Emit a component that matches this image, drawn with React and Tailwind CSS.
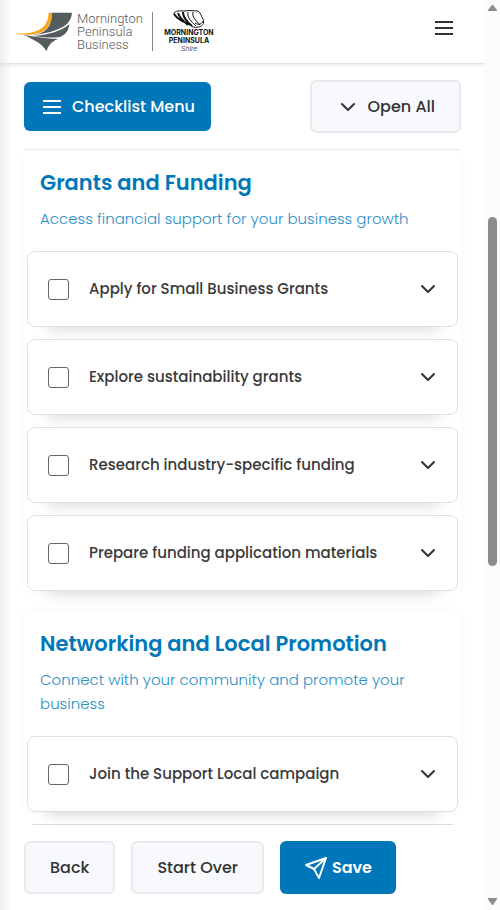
import { useState } from "react";

const sections = [
  {
    title: "Grants and Funding",
    text: "Access financial support for your business growth",
    items: [
      "Apply for Small Business Grants",
      "Explore sustainability grants",
      "Research industry-specific funding",
      "Prepare funding application materials",
    ],
  },
  {
    title: "Networking and Local Promotion",
    text: "Connect with your community and promote your business",
    items: ["Join the Support Local campaign"],
  },
];

function Chevron() {
  return (
    <svg width="16" height="16" viewBox="0 0 16 16" fill="none" stroke="currentColor" strokeWidth="2" strokeLinecap="round" strokeLinejoin="round" aria-hidden="true">
      <path d="M2 5 8 11 14 5" />
    </svg>
  );
}

function Bars() {
  return (
    <svg width="18" height="14" viewBox="0 0 18 14" fill="currentColor" aria-hidden="true">
      <path d="M0 0h18v2H0zM0 6h18v2H0zM0 12h18v2H0z" />
    </svg>
  );
}

function Logo() {
  return (
    <a href="#home" className="flex items-center" aria-label="Mornington Peninsula Business">
      <svg width="56" height="40" viewBox="0 0 168 120" aria-hidden="true">
        <path d="M2 64C52 66 96 56 98 2H108C108 58 70 74 2 66Z" fill="#f9a61a" />
        <path d="M108 2H168C166 20 160 30 150 38C126 56 84 67 44 69C88 66 108 46 108 2Z" fill="#555c5d" />
        <path d="M160 37C158 56 148 69 132 75C104 79 76 75 50 72C98 70 138 56 160 37Z" fill="#555c5d" />
        <path d="M24 69C56 73 92 81 126 81C106 88 96 102 92 118C80 96 56 84 24 69Z" fill="#555c5d" />
      </svg>
      <span className="ml-[5px] w-[71px] font-['Roboto',sans-serif] text-[13px] leading-[13px] font-light text-[#555c5d]">
        Mornington Peninsula Business
      </span>
      <span className="ml-1 h-[39px] w-px bg-[#888]" />
      <span className="ml-2 flex w-[56px] flex-col items-center font-['Inter',sans-serif] text-[7px] leading-[8px] font-bold text-[#111]">
        <svg width="32" height="19" viewBox="0 0 32 19" fill="none" stroke="#111" strokeLinejoin="round" aria-hidden="true">
          <path d="M1 3C4 0 8 1 12 1C16 0 20 1 25 1C28 3 28 6 30 9C32 13 29 17 25 17C22 18 19 17 17 15L9 11C4 8 1 6 1 3Z" strokeWidth="1" />
          <path d="M1 4C4 9 8 10 11 12M5 3C7 9 11 11 15 15M10 2C10 8 14 12 19 16" strokeWidth="2" />
          <path d="M15 2C14 8 18 11 23 16M20 2C19 8 23 10 27 15M22 13C25 15 28 15 30 11" strokeWidth="1" />
        </svg>
        <span>MORNINGTON</span>
        <span>PENINSULA</span>
        <span className="font-['Liberation_Sans',sans-serif] font-normal text-[#555] italic">Shire</span>
      </span>
    </a>
  );
}

function Item({ label }) {
  return (
    <li className="flex h-[76px] items-center rounded-lg border border-[#dfdfdf] bg-white pr-[21px] pl-5 shadow-[0_22px_16px_-20px_rgba(0,0,0,0.16)]">
      <label className="flex flex-1 items-center gap-5 text-[15px] leading-6 font-medium text-[#3a3a3a]">
        <input type="checkbox" className="size-[21px] shrink-0 appearance-none rounded-[3px] border border-[#666] bg-white checked:bg-[#0077b8]" />
        {label}
      </label>
      <button type="button" aria-label={"Show " + label}>
        <Chevron />
      </button>
    </li>
  );
}

export default function App() {
  const [open, setOpen] = useState(false);
  const secondary = "flex h-[53px] items-center rounded-md border-2 border-[#e8eaed] bg-[#f7f9fc]";
  return (
    <div className="flex min-h-screen bg-white font-['Poppins','Inter',sans-serif] text-base text-[#333]">
      <div className="flex min-w-0 flex-1 flex-col bg-[linear-gradient(to_right,#eeeeee,#ffffff_12px)]">
        <header className="flex h-[64px] items-center justify-between border-b border-[#e4e4e4] pr-8 pl-4 shadow-[0_1px_4px_rgba(0,0,0,0.10)]">
          <Logo />
          <button type="button" aria-label="Menu" className="mb-2">
            <Bars />
          </button>
        </header>
        <div className="flex flex-1 flex-col px-6 pt-4">
          <div className="flex items-center justify-between border-b border-[#ebebeb] pb-4">
            <button type="button" className="flex h-[49px] items-center gap-[11px] rounded-md bg-[#0077b8] pr-4 pl-[19px] font-medium text-white">
              <Bars />
              Checklist Menu
            </button>
            <button type="button" onClick={() => setOpen(!open)} className={secondary + " gap-3 pr-6 pl-7 font-medium"}>
              <Chevron />
              Open All
            </button>
          </div>
          <main className="flex flex-col gap-5">
            {sections.map((s) => (
              <section key={s.title} className="rounded-lg px-[3px] pt-4 shadow-[0_0_8px_rgba(0,60,100,0.03)]">
                <div className="px-[13px]">
                  <h2 className="text-[21px] leading-[33px] font-semibold text-[#0077b8]">{s.title}</h2>
                  <p className="pt-2 text-[15px] leading-6 font-light text-[#2a8fc7]">{s.text}</p>
                </div>
                <ul className="flex flex-col gap-3 pt-5">
                  {s.items.map((i) => (
                    <Item key={i} label={i} />
                  ))}
                </ul>
              </section>
            ))}
          </main>
          <footer className="pt-3">
            <hr className="mx-2 border-[#dcdcdc]" />
            <div className="flex gap-4 pt-4">
              <button type="button" className={secondary + " px-6 font-medium"}>Back</button>
              <button type="button" className={secondary + " px-6 font-medium"}>Start Over</button>
              <button type="button" className="flex h-[53px] items-center gap-1 rounded-md bg-[#0077b8] px-6 font-semibold text-white">
                <svg width="24" height="24" viewBox="0 0 24 24" fill="none" stroke="currentColor" strokeWidth="2" strokeLinejoin="round" aria-hidden="true">
                  <path d="M22 2 2 9 10 13 15 22ZM22 2 10 13" />
                </svg>
                Save
              </button>
            </div>
          </footer>
        </div>
      </div>
      <aside aria-hidden="true" className="sticky top-0 flex h-screen w-[15px] flex-col items-center bg-[#fbfbfb] py-1">
        <svg width="9" height="8" viewBox="0 0 9 8" fill="#8b8b8b"><path d="M4 1h1l4 5v1H0V6Z" /></svg>
        <div className="flex flex-1 flex-col pt-[205px]">
          <div className="h-[349px] w-[9px] rounded-full bg-[#8b8b8b]" />
        </div>
        <svg width="9" height="8" viewBox="0 0 9 8" fill="#8b8b8b"><path d="M0 0h9v1L5 7H4L0 1Z" /></svg>
      </aside>
    </div>
  );
}
